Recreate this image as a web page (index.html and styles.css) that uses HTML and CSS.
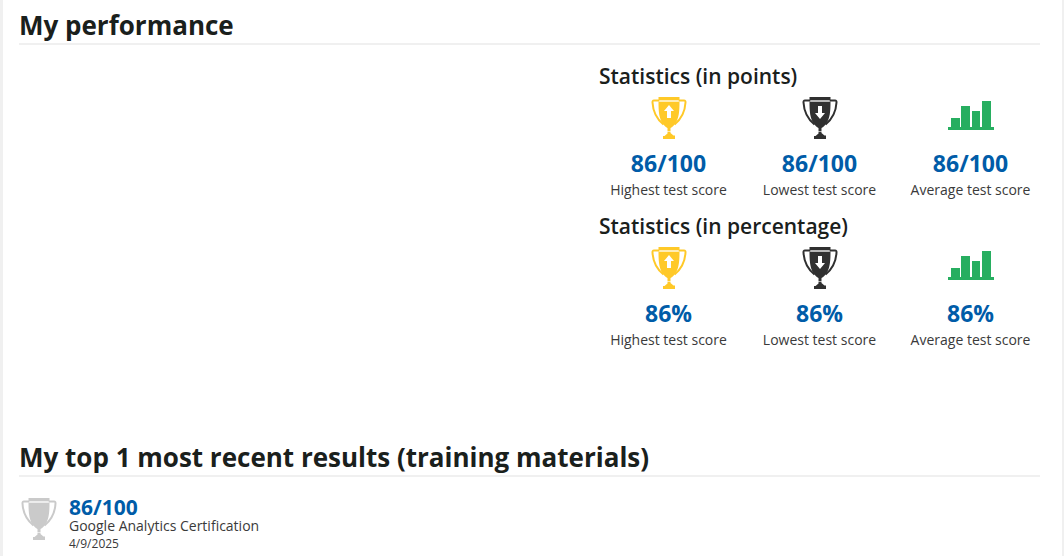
FILE: index.html
```html
<!DOCTYPE html>
<html lang="en">
<head>
<meta charset="utf-8">
<title>My performance</title>
<link rel="stylesheet" href="styles.css">
</head>
<body>
<svg class="defs" aria-hidden="true">
  <symbol id="cup" viewBox="0 0 36 44">
    <path d="M7.500 1h21v3.500h-21z"/>
    <path d="M7.500 5.500h21c0 10-.5 17-4.500 22.500-1.800 2.500-3.500 3.500-4.500 4v5l3 2.500H24V43H12v-3h1.500l3-2.500v-5.500c-1-.5-2.700-1.500-4.500-4-4-5.500-4.500-12.500-4.500-22.500z"/>
    <path class="handle" d="M8.500 4.500H3c-1.200 0-1.600.6-1.500 2C2 16 5 22.500 12.500 28.500M27.500 4.500H33c1.200 0 1.600.6 1.500 2C34 16 31 22.500 23.500 28.500"/>
    <path class="rim" d="M8 5h20"/>
    <path class="rim" d="M15 35.500h6"/>
  </symbol>
  <symbol id="bars" viewBox="0 0 48 44">
    <path d="M1 31h46v3H1zM4 22h9v10H4zM14 10h9v22h-9zM25 15h8v17h-8zM35 5h9v27h-9z"/>
  </symbol>
</svg>
<main class="page">
  <section class="performance">
    <h1 class="heading">My performance</h1>
    <div class="statistics">
      <h2 class="subheading">Statistics (in points)</h2>
      <div class="scores">
        <div class="score"><svg class="icon gold"><use href="#cup"/><path class="hole" d="M18 9l5 6h-3v7h-4v-7h-3z"/></svg><strong class="value">86/100</strong><span class="label">Highest test score</span></div>
        <div class="score"><svg class="icon dark"><use href="#cup"/><path class="hole" d="M18 23l5-6h-3v-7h-4v7h-3z"/></svg><strong class="value">86/100</strong><span class="label">Lowest test score</span></div>
        <div class="score"><svg class="icon chart"><use href="#bars"/></svg><strong class="value">86/100</strong><span class="label">Average test score</span></div>
      </div>
      <h2 class="subheading">Statistics (in percentage)</h2>
      <div class="scores">
        <div class="score"><svg class="icon gold"><use href="#cup"/><path class="hole" d="M18 9l5 6h-3v7h-4v-7h-3z"/></svg><strong class="value">86%</strong><span class="label">Highest test score</span></div>
        <div class="score"><svg class="icon dark"><use href="#cup"/><path class="hole" d="M18 23l5-6h-3v-7h-4v7h-3z"/></svg><strong class="value">86%</strong><span class="label">Lowest test score</span></div>
        <div class="score"><svg class="icon chart"><use href="#bars"/></svg><strong class="value">86%</strong><span class="label">Average test score</span></div>
      </div>
    </div>
  </section>
  <section class="results">
    <h1 class="heading">My top 1 most recent results (training materials)</h1>
    <article class="result">
      <svg class="icon grey"><use href="#cup"/></svg>
      <div class="details"><strong class="points">86/100</strong><span class="name">Google Analytics Certification</span><time class="date" datetime="2025-04-09">4/9/2025</time></div>
    </article>
  </section>
</main>
</body>
</html>
```
FILE: styles.css
```css
* { box-sizing: border-box; }
body { margin: 0; background: #f0f0f0; color: #1a201c; font-family: "Open Sans", sans-serif; }
.defs { position: absolute; width: 0; height: 0; }
.page { min-height: 100vh; margin: 0 2px 0 3px; padding: 8px 22px 0 16px; background: #fff; }
.performance { min-height: 432px; }
.heading { margin: 0; border-bottom: 2px solid #f0f0f0; font-size: 26px; line-height: 35px; font-weight: 700; }
.statistics { width: 441px; margin: 14px 0 0 auto; }
.subheading { margin: 0; font-size: 21px; line-height: 34px; font-weight: 600; }
.scores { display: grid; grid-template-columns: repeat(3, 1fr); gap: 12px; padding-top: 3px; margin-bottom: 8px; }
.score { display: flex; flex-direction: column; align-items: center; }
.icon { width: 36px; height: 44px; fill: currentColor; flex: none; }
.handle { fill: none; stroke: currentColor; stroke-width: 2; }
.rim { fill: none; stroke: #fff; stroke-opacity: .6; }
.hole { fill: #fff; }
.gold { color: #ffc928; }
.dark { color: #303030; }
.chart { width: 48px; color: #27ae60; }
.grey { color: #cacaca; }
.value { margin-top: 8px; color: #005ca8; font-size: 23px; line-height: 30px; }
.label { color: #3a3a3a; font-size: 14px; line-height: 23px; white-space: nowrap; }
.result { display: flex; gap: 12px; padding: 20px 0 0 2px; }
.details { display: flex; flex-direction: column; }
.points { color: #005ca8; font-size: 21px; line-height: 20px; }
.name { color: #3a3a3a; font-size: 14px; line-height: 17px; }
.date { color: #3a3a3a; font-size: 12px; line-height: 20px; }
```
